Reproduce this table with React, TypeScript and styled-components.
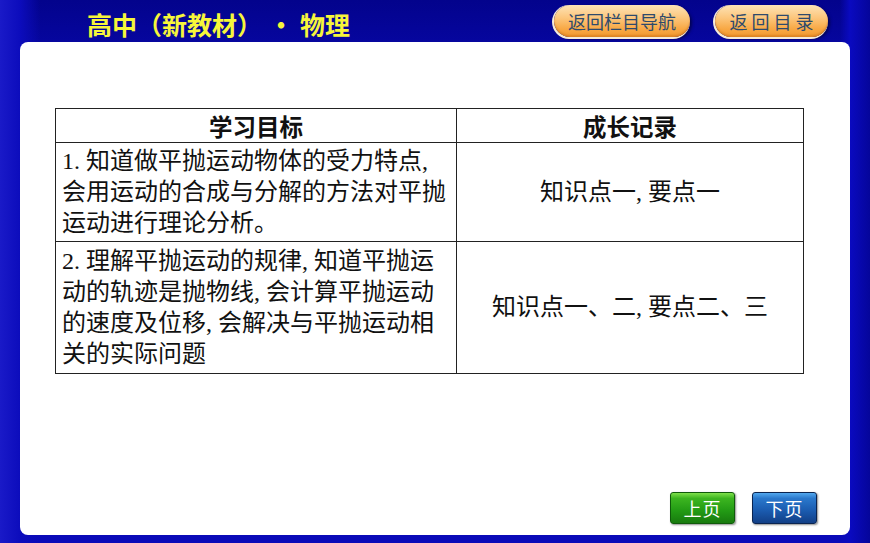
import React from "react";
import styled, { createGlobalStyle } from "styled-components";

const GlobalStyle = createGlobalStyle`
  html, body {
    margin: 0;
    padding: 0;
    width: 870px;
    height: 543px;
    overflow: hidden;
    background: #0808b4;
  }
  * { box-sizing: border-box; }
`;

const Page = styled.div`
  width: 870px;
  height: 543px;
  display: flex;
  flex-direction: column;
  background:
    linear-gradient(90deg, #1a1ac8 0px, #0c0cbc 20px, rgba(8, 8, 180, 0) 40px),
    linear-gradient(270deg, #05059a 0px, #0a0ac0 20px, rgba(8, 8, 180, 0) 30px),
    linear-gradient(180deg, #03038c 0px, #06069e 42px, #0909b6 120px, #0a0ab8 100%);
`;

const Header = styled.header`
  height: 42px;
  flex: none;
  display: flex;
  align-items: center;
  padding: 0 42px 0 87px;
`;

const Title = styled.h1`
  margin: 0;
  padding-top: 5px;
  display: flex;
  align-items: center;
  font-family: "Noto Sans CJK SC", "Noto Sans", sans-serif;
  font-weight: 700;
  font-size: 25px;
  line-height: 30px;
  color: #f6f63a;
  white-space: nowrap;
`;

const Dot = styled.span`
  display: inline-block;
  width: 38px;
  text-align: center;
`;

const Spacer = styled.div`
  flex: 1;
`;

const NavGroup = styled.nav`
  display: flex;
  align-items: center;
  gap: 25px;
`;

const PillButton = styled.button<{ $w: number; $spacing?: number }>`
  width: ${(p) => p.$w}px;
  height: 32px;
  border: none;
  border-radius: 16px;
  padding: 0;
  display: flex;
  align-items: center;
  justify-content: center;
  font-family: "Noto Sans CJK SC", "Noto Sans", sans-serif;
  font-size: 18px;
  letter-spacing: ${(p) => p.$spacing ?? 0}px;
  text-indent: ${(p) => p.$spacing ?? 0}px;
  color: #2e4a6c;
  background: linear-gradient(180deg, #fde3b6 0%, #fcc67c 40%, #f8a844 75%, #f39a30 100%);
  box-shadow:
    inset 0 -2px 2px rgba(180, 90, 10, 0.35),
    -1px 1px 0 1px #f6ead8,
    2px 2px 3px rgba(0, 0, 30, 0.55);
  cursor: pointer;
`;

const Panel = styled.main`
  flex: 1;
  margin: 0 20px 8px 20px;
  background: #ffffff;
  border-radius: 8px;
  display: flex;
  flex-direction: column;
  padding: 66px 47px 11px 35px;
`;

const Table = styled.table`
  width: 748px;
  border-collapse: collapse;
  table-layout: fixed;
  font-family: "Liberation Serif", "Noto Sans CJK SC", serif;
  color: #111;
`;

const HeadCell = styled.th<{ $w: number }>`
  width: ${(p) => p.$w}px;
  height: 34px;
  border: 1px solid #222;
  padding: 0;
  text-align: center;
  vertical-align: middle;
  font-family: "Noto Sans CJK SC", "Noto Sans", sans-serif;
  font-weight: 700;
  font-size: 23.5px;
  line-height: 30px;
`;

const TextCell = styled.td<{ $h: number }>`
  height: ${(p) => p.$h}px;
  border: 1px solid #222;
  padding: 0 2px 0 6px;
  vertical-align: middle;
  font-size: 24px;
  line-height: 31px;
  white-space: nowrap;
`;

const RecordCell = styled.td`
  border: 1px solid #222;
  padding: 0;
  text-align: center;
  vertical-align: middle;
  font-size: 24px;
  line-height: 31px;
  white-space: nowrap;
`;

const Footer = styled.footer`
  margin-top: auto;
  margin-right: -14px;
  display: flex;
  justify-content: flex-end;
  gap: 17px;
`;

const PageButton = styled.button<{ $tone: "green" | "blue" }>`
  width: 65px;
  height: 32px;
  border-radius: 3px;
  padding: 0;
  display: flex;
  align-items: center;
  justify-content: center;
  font-family: "Noto Sans CJK SC", "Noto Sans", sans-serif;
  font-size: 18px;
  color: #ffffff;
  letter-spacing: 1px;
  border: 1px solid ${(p) => (p.$tone === "green" ? "#0f5a0a" : "#0a2450")};
  background: ${(p) =>
    p.$tone === "green"
      ? "linear-gradient(180deg, #7ee04a 0%, #3cb520 18%, #229a14 60%, #187a0e 100%)"
      : "linear-gradient(180deg, #52a8ee 0%, #2a78cc 18%, #1a5aae 60%, #123f86 100%)"};
  box-shadow: 1px 1px 2px rgba(0, 0, 0, 0.45);
  cursor: pointer;
`;

export default function App() {
  return (
    <>
      <GlobalStyle />
      <Page>
        <Header>
          <Title>
            高中（新教材）<Dot>·</Dot>物理
          </Title>
          <Spacer />
          <NavGroup>
            <PillButton $w={136}>返回栏目导航</PillButton>
            <PillButton $w={113} $spacing={4}>
              返回目录
            </PillButton>
          </NavGroup>
        </Header>
        <Panel>
          <Table>
            <thead>
              <tr>
                <HeadCell $w={401}>学习目标</HeadCell>
                <HeadCell $w={347}>成长记录</HeadCell>
              </tr>
            </thead>
            <tbody>
              <tr>
                <TextCell $h={99}>
                  1. 知道做平抛运动物体的受力特点,
                  <br />
                  会用运动的合成与分解的方法对平抛
                  <br />
                  运动进行理论分析。
                </TextCell>
                <RecordCell>知识点一, 要点一</RecordCell>
              </tr>
              <tr>
                <TextCell $h={132}>
                  2. 理解平抛运动的规律, 知道平抛运
                  <br />
                  动的轨迹是抛物线, 会计算平抛运动
                  <br />
                  的速度及位移, 会解决与平抛运动相
                  <br />
                  关的实际问题
                </TextCell>
                <RecordCell>知识点一、二, 要点二、三</RecordCell>
              </tr>
            </tbody>
          </Table>
          <Footer>
            <PageButton $tone="green">上页</PageButton>
            <PageButton $tone="blue">下页</PageButton>
          </Footer>
        </Panel>
      </Page>
    </>
  );
}
